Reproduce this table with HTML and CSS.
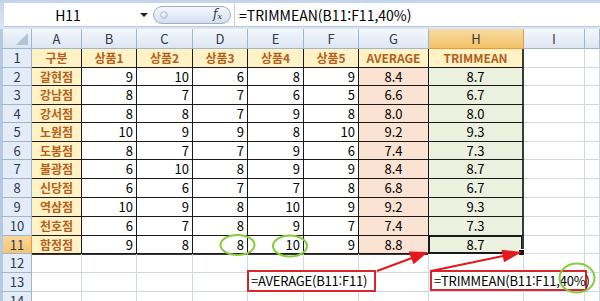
FILE: index.html
```html
<!DOCTYPE html>
<html lang="ko">
<head>
<meta charset="utf-8">
<title>TRIMMEAN</title>
<link rel="stylesheet" href="styles.css">
</head>
<body>
<div class="page">
  <div class="fbar">
    <div class="fwhite">
      <div class="namebox"><span class="nm">H11</span><span class="dd"></span></div>
      <div class="pill"><span class="grip"></span><span class="fx">f<sub>x</sub></span></div>
      <div class="formula">=TRIMMEAN(B11:F11,40%)</div>
    </div>
  </div>
  <div class="sheet">
    <div class="corner"><span class="tri"></span></div>
    <div class="ch">A</div><div class="ch">B</div><div class="ch">C</div><div class="ch">D</div><div class="ch">E</div><div class="ch">F</div><div class="ch">G</div><div class="ch act">H</div><div class="ch">I</div><div class="ch"></div>

    <div class="rh">1</div>
    <div class="k t">구분</div><div class="k t">상품1</div><div class="k t">상품2</div><div class="k t">상품3</div><div class="k t">상품4</div><div class="k t">상품5</div><div class="k t">AVERAGE</div><div class="k t te">TRIMMEAN</div><div class="c"></div><div class="c"></div>

    <div class="rh">2</div>
    <div class="k t">갈현점</div><div class="n t">9</div><div class="n t">10</div><div class="n t">6</div><div class="n t">8</div><div class="n t">9</div><div class="g t">8.4</div><div class="h t te">8.7</div><div class="c"></div><div class="c"></div>

    <div class="rh">3</div>
    <div class="k t">강남점</div><div class="n t">8</div><div class="n t">7</div><div class="n t">7</div><div class="n t">6</div><div class="n t">5</div><div class="g t">6.6</div><div class="h t te">6.7</div><div class="c"></div><div class="c"></div>

    <div class="rh">4</div>
    <div class="k t">강서점</div><div class="n t">8</div><div class="n t">8</div><div class="n t">7</div><div class="n t">9</div><div class="n t">8</div><div class="g t">8.0</div><div class="h t te">8.0</div><div class="c"></div><div class="c"></div>

    <div class="rh">5</div>
    <div class="k t">노원점</div><div class="n t">10</div><div class="n t">9</div><div class="n t">9</div><div class="n t">8</div><div class="n t">10</div><div class="g t">9.2</div><div class="h t te">9.3</div><div class="c"></div><div class="c"></div>

    <div class="rh">6</div>
    <div class="k t">도봉점</div><div class="n t">8</div><div class="n t">7</div><div class="n t">7</div><div class="n t">9</div><div class="n t">6</div><div class="g t">7.4</div><div class="h t te">7.3</div><div class="c"></div><div class="c"></div>

    <div class="rh">7</div>
    <div class="k t">불광점</div><div class="n t">6</div><div class="n t">10</div><div class="n t">8</div><div class="n t">9</div><div class="n t">9</div><div class="g t">8.4</div><div class="h t te">8.7</div><div class="c"></div><div class="c"></div>

    <div class="rh">8</div>
    <div class="k t">신당점</div><div class="n t">6</div><div class="n t">6</div><div class="n t">7</div><div class="n t">7</div><div class="n t">8</div><div class="g t">6.8</div><div class="h t te">6.7</div><div class="c"></div><div class="c"></div>

    <div class="rh">9</div>
    <div class="k t">역삼점</div><div class="n t">10</div><div class="n t">9</div><div class="n t">8</div><div class="n t">10</div><div class="n t">9</div><div class="g t">9.2</div><div class="h t te">9.3</div><div class="c"></div><div class="c"></div>

    <div class="rh">10</div>
    <div class="k t">천호점</div><div class="n t">6</div><div class="n t">7</div><div class="n t">8</div><div class="n t">9</div><div class="n t">7</div><div class="g t">7.4</div><div class="h t te">7.3</div><div class="c"></div><div class="c"></div>

    <div class="rh act">11</div>
    <div class="k t be">함정점</div><div class="n t be">9</div><div class="n t be">8</div><div class="n t be">8</div><div class="n t be">10</div><div class="n t be">9</div><div class="g t be">8.8</div><div class="h t te be sel">8.7<span class="handle"></span></div><div class="c"></div><div class="c"></div>

    <div class="rh">12</div>
    <div class="c"></div><div class="c"></div><div class="c"></div><div class="c"></div><div class="c"></div><div class="c"></div><div class="c"></div><div class="c"></div><div class="c"></div><div class="c"></div>

    <div class="rh">13</div>
    <div class="c"></div><div class="c"></div><div class="c"></div><div class="c"></div><div class="c"></div><div class="c"></div><div class="c"></div><div class="c"></div><div class="c"></div><div class="c"></div>

    <div class="rh">14</div>
    <div class="c"></div><div class="c"></div><div class="c"></div><div class="c"></div><div class="c"></div><div class="c"></div><div class="c"></div><div class="c"></div><div class="c"></div><div class="c"></div>
  </div>

  <div class="callout c1">=AVERAGE(B11:F11)</div>
  <div class="callout c2">=TRIMMEAN(B11:F11,40%)</div>

  <svg class="marks" width="600" height="301" viewBox="0 0 600 301">
    <g fill="none" stroke="#86cc3a" stroke-width="2">
      <ellipse cx="237.5" cy="245" rx="17" ry="10"/>
      <ellipse cx="290" cy="246" rx="17" ry="10.5"/>
      <ellipse cx="577" cy="278" rx="17.5" ry="14.5"/>
    </g>
    <g stroke="#e3191f" stroke-width="2" fill="#e3191f">
      <line x1="377" y1="271" x2="412" y2="258"/>
      <polygon points="428,252 413.6,264.2 408.6,251.6" stroke="none"/>
      <line x1="431" y1="271" x2="503" y2="256"/>
      <polygon points="522,252 504,262.3 501.5,249.8" stroke="none"/>
    </g>
  </svg>
</div>
</body>
</html>
```

FILE: styles.css
```css
html, body {
  margin: 0;
  padding: 0;
  background: #ffffff;
}
body {
  font-family: "Noto Sans CJK KR", "Noto Sans", sans-serif;
  font-size: 13px;
  line-height: 14px;
  color: #000;
  overflow: hidden;
}
.page {
  position: relative;
  width: 600px;
  height: 301px;
  overflow: hidden;
}

/* formula bar */
.fbar {
  height: 29px;
  box-sizing: border-box;
  padding: 3px 0 2px 4px;
  background: linear-gradient(#c3d4ea, #dbe6f4);
}
.fwhite {
  height: 24px;
  background: #ffffff;
  display: flex;
  align-items: center;
  border-bottom: 1px solid #b9c9dd;
  box-sizing: border-box;
}
.namebox {
  width: 147px;
  height: 100%;
  display: flex;
  align-items: center;
}
.nm {
  flex: 1;
  text-align: center;
  font-size: 14px;
  padding-right: 8px;
}
.dd {
  width: 0;
  height: 0;
  border-left: 4px solid transparent;
  border-right: 4px solid transparent;
  border-top: 4px solid #222;
  margin-right: 3px;
}
.pill {
  width: 78px;
  height: 18px;
  margin-left: 2px;
  box-sizing: border-box;
  border: 1px solid #9aaecb;
  border-radius: 9px;
  background: linear-gradient(#f6f9fd, #d3def0);
  display: flex;
  align-items: center;
  justify-content: space-between;
  padding: 0 8px 0 6px;
}
.grip {
  width: 6px;
  height: 6px;
  border-radius: 50%;
  background: radial-gradient(circle at 40% 35%, #ffffff, #a9bcd6);
  border: 1px solid #b7c6da;
}
.fx {
  font-family: "DejaVu Serif", "Liberation Serif", serif;
  font-style: italic;
  font-size: 12px;
  color: #333;
  line-height: 1;
}
.fx sub {
  font-size: 8px;
  vertical-align: -1px;
}
.formula {
  flex: 1;
  height: 100%;
  margin-left: 3px;
  border-left: 1px solid #c5d1e0;
  display: flex;
  align-items: center;
  padding-left: 4px;
  font-size: 14px;
  white-space: nowrap;
}

/* sheet grid */
.sheet {
  display: grid;
  grid-template-columns: 32px 50px 55px 56px 55px 56px 55px 70px 95px 61px 15px;
  grid-template-rows: 20px 19px 18px 19px 18px 19px 18px 19px 19px 19px 19px 18px 19px 19px 19px;
}
.sheet > div {
  box-sizing: border-box;
  display: flex;
  align-items: center;
  white-space: nowrap;
  overflow: hidden;
}
.corner {
  background: linear-gradient(#f1f5fb, #dbe5f3);
  border-left: 3px solid #b6c9e2;
  border-right: 1px solid #9eb6ce;
  border-bottom: 1px solid #9eb6ce;
  position: relative;
}
.tri {
  position: absolute;
  right: 3px;
  bottom: 3px;
  width: 0;
  height: 0;
  border-left: 12px solid transparent;
  border-bottom: 12px solid #b3c3d8;
}
.ch {
  background: linear-gradient(#f5f8fc, #dce6f3);
  border-right: 1px solid #9eb6ce;
  border-bottom: 1px solid #9eb6ce;
  justify-content: center;
  color: #2c3a4c;
  font-size: 13px;
}
.ch.act {
  background: linear-gradient(#f9dca6, #f2c264);
  border-bottom-color: #f29536;
  border-right-color: #d9a14e;
}
.rh {
  background: #e4ecf7;
  border-left: 3px solid #b6c9e2;
  border-right: 1px solid #9eb6ce;
  border-bottom: 1px solid #9eb6ce;
  justify-content: center;
  color: #2c3a4c;
  font-size: 13px;
}
.rh.act {
  background: linear-gradient(#f9d79b, #f5c470);
  border-right-color: #f29536;
}
.c {
  border-right: 1px solid #d0d7e5;
  border-bottom: 1px solid #d0d7e5;
}
.t {
  border-right: 1px solid #1a1a1a;
  border-bottom: 1px solid #1a1a1a;
}
.te {
  border-right: 2px solid #3a3a3a;
}
.be {
  border-bottom: 1px solid #1a1a1a;
  box-shadow: 0 1px 0 #3a3a3a;
}
.k {
  background: #fff2c4;
  color: #b2601c;
  font-weight: bold;
  justify-content: center;
  font-size: 12px;
}
.n {
  justify-content: flex-end;
  padding-right: 3px;
  font-size: 13px;
}
.g {
  background: #fbe3d3;
  justify-content: center;
  font-size: 13px;
}
.h {
  background: #ebf1de;
  justify-content: center;
  font-size: 13px;
}
.sel {
  position: relative;
  overflow: visible !important;
  box-shadow: inset 0 0 0 1px #1a1a1a;
}
.handle {
  position: absolute;
  right: -3px;
  bottom: -3px;
  width: 5px;
  height: 5px;
  background: #111;
  border: 1px solid #fff;
}

/* callouts */
.callout {
  position: absolute;
  box-sizing: border-box;
  border: 2px solid #d8262c;
  background: #ffffff;
  font-size: 13px;
  letter-spacing: -0.2px;
  display: flex;
  align-items: center;
  padding-left: 2px;
  white-space: nowrap;
}
.c1 {
  left: 247px;
  top: 270px;
  width: 129px;
  height: 22px;
}
.c2 {
  left: 430px;
  top: 270px;
  width: 157px;
  height: 21px;
}
.marks {
  position: absolute;
  left: 0;
  top: 0;
  pointer-events: none;
}
```
